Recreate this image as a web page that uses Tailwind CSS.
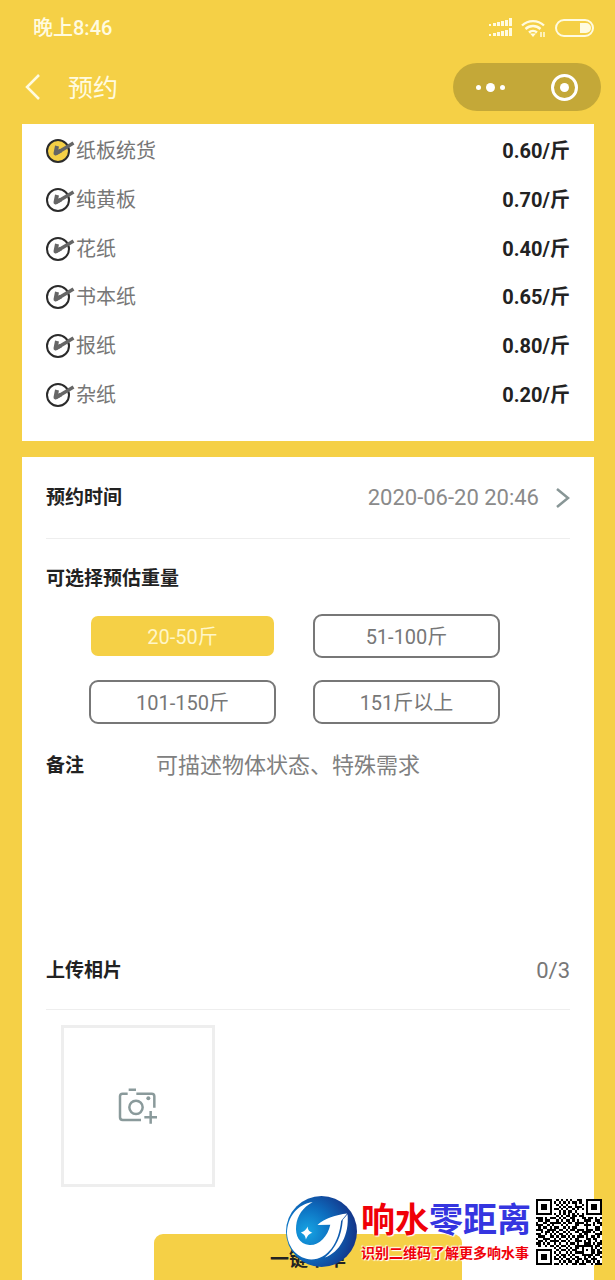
<!DOCTYPE html>
<html lang="zh-CN">
<head>
  <meta charset="UTF-8">
  <meta name="viewport" content="width=device-width, initial-scale=1.0">
  <title>预约</title>
  <script src="https://cdn.jsdelivr.net/npm/@tailwindcss/browser@4"></script>
</head>
<body class="relative min-h-screen flex flex-col overflow-x-hidden bg-[#f5d046] font-[Roboto,'Noto_Sans_CJK_SC',sans-serif] text-[#777]">
  <!-- Status bar -->
  <div class="h-[54px] pt-px pl-[33px] pr-[21px] flex items-center justify-between text-[#fffbe0]">
    <span class="text-[20px] leading-6 font-medium">晚上8:46</span>
    <div class="flex items-center gap-[9px]">
      <svg class="w-6 h-5" viewBox="0 0 24 20" fill="currentColor">
        <path d="M1 6h2v2H1zM5 5h3v3H5zM9 4h3v4H9zM13 3h3v5h-3zM17 2h3v6h-3zM21 0h3v8h-3zM1 16h2v2H1zM5 15h3v3H5zM9 14h3v4H9zM13 13h3v5h-3zM17 12h3v6h-3zM21 10h3v8h-3z"/>
      </svg>
      <svg class="w-[25px] h-5" viewBox="0 0 25 20" fill="none" stroke="currentColor" stroke-width="2.4">
        <path d="M1 7.500a16 16 0 0 1 22 0M4.500 11a11 11 0 0 1 15 0M8 14.500a6 6 0 0 1 8 0"/>
        <path d="M9 15.500h6L12 19z" fill="currentColor" stroke="none"/>
        <path d="M20 14v5M23 14v5" stroke-width="1.500"/>
      </svg>
      <svg class="w-[39px] h-[18px]" viewBox="0 0 39 18">
        <rect x="1" y="1" width="37" height="16" rx="8" fill="none" stroke="currentColor" stroke-width="2"/>
        <path d="M25 4h6a5 5 0 0 1 0 10h-6z" fill="currentColor"/>
      </svg>
    </div>
  </div>

  <!-- Nav bar -->
  <header class="h-[70px] pl-[24px] pr-[14px] pb-1 flex items-center text-[#fffbe0]">
    <button type="button" aria-label="返回" class="w-[18px] h-[28px]">
      <svg class="w-[18px] h-[28px]" viewBox="0 0 18 28" fill="none" stroke="currentColor" stroke-width="2.500"><path d="M15 2L3 14l12 12"/></svg>
    </button>
    <h1 class="ml-[26px] pt-1 text-[25px] leading-8">预约</h1>
    <div class="ml-auto w-[148px] h-12 rounded-full bg-[#c4a838] flex text-white">
      <button type="button" aria-label="更多" class="flex-1 flex items-center justify-center gap-[5px]">
        <span class="size-[5px] rounded-full bg-current"></span>
        <span class="size-[9px] rounded-full bg-current"></span>
        <span class="size-[5px] rounded-full bg-current"></span>
      </button>
      <button type="button" aria-label="关闭" class="flex-1 flex items-center justify-center">
        <span class="size-[27px] rounded-full border-[3px] border-current flex items-center justify-center">
          <span class="size-[9px] rounded-full bg-current"></span>
        </span>
      </button>
    </div>
  </header>

  <main class="flex-1 flex flex-col gap-4 pl-[22px] pr-[21px]">
    <!-- Paper types -->
    <section class="bg-white h-[317px] px-6 pt-[3px] pb-[22px]">
      <ul id="types" class="h-full grid auto-rows-fr text-[20px] leading-6"></ul>
    </section>

    <form class="flex-1 bg-white px-6 flex flex-col">
      <div class="h-[82px] border-b border-[#eee] flex items-center justify-between">
        <h2 class="text-[19px] leading-6 font-bold text-[#222]">预约时间</h2>
        <button type="button" class="flex items-center gap-4 text-[22px] leading-6 text-[#8a8a8a]">
          2020-06-20 20:46
          <svg class="w-[15px] h-[22px]" viewBox="0 0 15 22" fill="none" stroke="#889696" stroke-width="2.500"><path d="M2 2l11 9-11 9"/></svg>
        </button>
      </div>

      <fieldset>
        <legend class="pt-[28px] pb-[23px] text-[19px] leading-6 font-bold text-[#222]">可选择预估重量</legend>
        <div class="ml-[43px] mr-[70px] grid grid-cols-2 gap-x-[37px] gap-y-[22px] text-[20px]">
          <button type="button" class="h-11 pt-[2px] rounded-[9px] border-2 border-transparent bg-clip-padding bg-[#f5d046] text-[#fff6c8]">20-50斤</button>
          <button type="button" class="h-11 pt-[2px] rounded-[9px] border-2 border-[#777]">51-100斤</button>
          <button type="button" class="h-11 pt-[2px] rounded-[9px] border-2 border-[#777]">101-150斤</button>
          <button type="button" class="h-11 pt-[2px] rounded-[9px] border-2 border-[#777]">151斤以上</button>
        </div>
      </fieldset>

      <div class="pt-[26px] flex">
        <label for="remark" class="w-[110px] text-[19px] leading-8 font-bold text-[#222]">备注</label>
        <textarea id="remark" placeholder="可描述物体状态、特殊需求" class="flex-1 h-[182px] resize-none outline-none text-[22px] leading-8 placeholder:text-[#808080]"></textarea>
      </div>

      <div class="h-[78px] border-b border-[#eee] flex items-center justify-between">
        <h2 class="text-[19px] leading-6 font-bold text-[#222]">上传相片</h2>
        <span class="text-[22px] leading-6">0/3</span>
      </div>
      <button type="button" aria-label="添加相片" class="mt-[15px] ml-[15px] w-[154px] h-[162px] border-[3px] border-[#eee] flex items-center justify-center">
        <svg class="w-10 h-[38px]" viewBox="236 232 120 114" fill="none" stroke="#8a9a9b" stroke-width="7.500">
          <path d="M265 252h-15a8 8 0 0 0-8 8v63a8 8 0 0 0 8 8h55M291 252h46a8 8 0 0 1 8 8v34M268 240h22M334 304v38M315 323h38"/>
          <circle cx="290" cy="293" r="20"/>
          <circle cx="327" cy="266" r="6" fill="#8a9a9b" stroke="none"/>
        </svg>
      </button>
      <button type="submit" class="mt-[47px] mx-auto w-[308px] h-[46px] pt-[5px] rounded-t-[9px] bg-[#f5d046] text-[19px] leading-6 font-bold text-[#222]">一键下单</button>
    </form>
  </main>

  <!-- Floating banner -->
  <aside class="absolute right-[13px] bottom-[13px] flex items-center">
    <svg class="size-[71px]" viewBox="19 22 210 210">
      <defs>
        <radialGradient id="globe" cx="0.3" cy="0.5" r="0.75">
          <stop offset="0" stop-color="#16a5e4"/>
          <stop offset="0.45" stop-color="#0d6fc0"/>
          <stop offset="1" stop-color="#152b80"/>
        </radialGradient>
      </defs>
      <circle cx="124" cy="127" r="105" fill="url(#globe)"/>
      <path fill="#fff" d="M98 40C54 46 22 84 22 134c3 42 32 74 72 76 48 0 82-50 88-114l18-22c-34 4-66 14-88 34l38-1c-8 36-34 62-62 60-30-3-42-28-39-57 3-30 20-54 49-70z"/>
      <path fill="#fff" d="M187 92l14-16c6 61-23 112-67 128 33-28 49-63 53-112z"/>
      <path fill="#fff" d="M83 112c1 10 3 13 14 19-11 4-14 8-19 20-2-12-5-15-15-21 11-4 15-8 20-18z"/>
    </svg>
    <div class="ml-1 w-[175px] font-bold whitespace-nowrap font-['Noto_Sans_CJK_SC',sans-serif] text-[#f00008] [text-shadow:0_0_2px_#fff,1px_1px_1px_#fff,-1px_-1px_1px_#fff]">
      <p class="text-[34px] leading-10">响水<span class="text-[#3535e0]">零距离</span></p>
      <p class="text-[14px] leading-7">识别二维码了解更多响水事</p>
    </div>
    <svg id="qr" class="size-[66px] bg-white" viewBox="0 0 29 29" shape-rendering="crispEdges"></svg>
  </aside>

  <script>
    const types = [
      ['纸板统货', '0.60'],
      ['纯黄板', '0.70'],
      ['花纸', '0.40'],
      ['书本纸', '0.65'],
      ['报纸', '0.80'],
      ['杂纸', '0.20'],
    ];
    document.getElementById('types').innerHTML = types.map(([name, price], i) => `
      <li class="flex items-center justify-between">
        <label class="flex items-center">
          <span class="grid w-[30px]">
            <input type="radio" name="type" ${i === 0 ? 'checked' : ''} class="[grid-area:1/1] appearance-none size-6 rounded-full border-2 border-[#2b2b2b] bg-white checked:bg-[#f5d046]">
            <svg class="[grid-area:1/1] pointer-events-none w-[30px] h-6" viewBox="0 0 30 24" fill="none" stroke="#666" stroke-linejoin="round"><path d="M11 7L9.500 14.500L15 11.500" stroke-width="4"/><path d="M10 14.500L27.500 4" stroke-width="3.500"/></svg>
          </span>
          ${name}
        </label>
        <span class="font-bold text-[#222]">${price}/斤</span>
      </li>`).join('');

    const rows = [
      '11111110010101010011001111111',
      '10000010101010101101001000001',
      '10111010010101000100101011101',
      '10111010001010110111001011101',
      '10111010110101001010101011101',
      '10000010001010110100001000001',
      '11111110101010101010101111111',
      '00000000010101101101100000000',
      '11101011101010011000110110101',
      '01101100010101101010011100110',
      '10011011111010110111101001011',
      '11100101000101000110011101001',
      '01011010110010101100001000110',
      '11100111101101011011101110110',
      '00101101010010100110111101001',
      '11001010101101010001011000111',
      '01110011010110101011101011010',
      '10011100101001010110001101100',
      '01101011110110100111010100101',
      '11010100101001011010011101011',
      '01001011010110100111111110110',
      '00000000101001010110100010101',
      '11111110010110101100101011010',
      '10000010101001010111100011011',
      '10111010010110101000111110110',
      '10111010101010010110010101001',
      '10111010110101101011011011100',
      '10000010001010110110101101010',
      '11111110110101001101110010111',
    ];
    let d = '';
    rows.forEach((row, y) => [...row].forEach((c, x) => {
      if (c === '1') d += `M${x} ${y}h1v1h-1z`;
    }));
    document.getElementById('qr').innerHTML = `<path d="${d}" fill="#000"/>`;
  </script>
</body>
</html>
